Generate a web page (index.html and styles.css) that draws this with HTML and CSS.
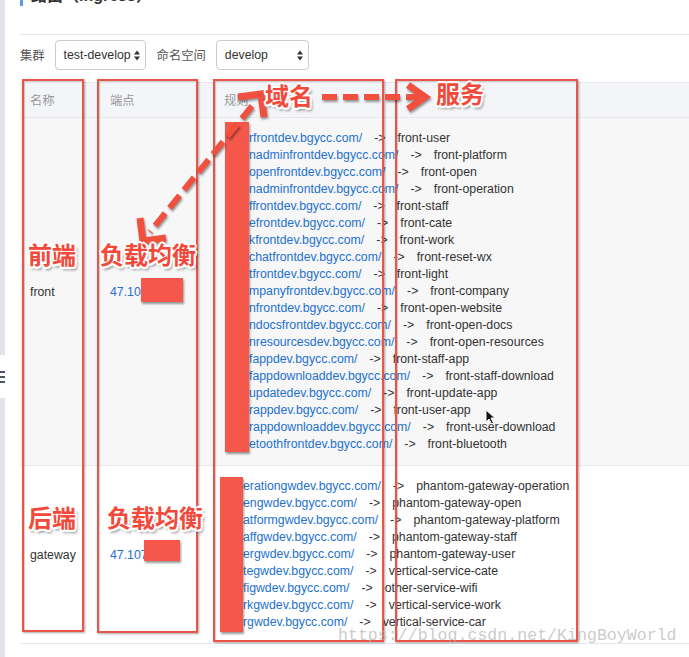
FILE: index.html
```html
<!DOCTYPE html>
<html lang="zh-CN">
<head>
<meta charset="utf-8">
<title>路由（ingress）</title>
<link rel="stylesheet" href="styles.css">
</head>
<body>
<div class="app">
  <aside class="sidebar">
    <div class="side-toggle"><span></span><span></span><span></span></div>
  </aside>
  <main class="main">
    <div class="page-head"><h2 class="title">路由（ingress）</h2></div>
    <div class="filters">
      <span class="flabel">集群</span>
      <div class="select s1"><span>test-develop</span><svg class="caret" width="6" height="11" viewBox="0 0 6 11"><path d="M0 4.5 3 0.5 6 4.5Z M0 6.5 3 10.5 6 6.5Z"/></svg></div>
      <span class="flabel">命名空间</span>
      <div class="select s2"><span>develop</span><svg class="caret" width="6" height="11" viewBox="0 0 6 11"><path d="M0 4.5 3 0.5 6 4.5Z M0 6.5 3 10.5 6 6.5Z"/></svg></div>
    </div>
    <div class="table">
      <div class="row head">
        <div class="cell">名称</div>
        <div class="cell">端点</div>
        <div class="cell">规则</div>
      </div>
      <div class="row hover">
        <div class="cell mid">front</div>
        <div class="cell mid"><a class="link">47.10</a></div>
        <div class="cell rules front-rules">
          <div class="rule"><a class="link">rfrontdev.bgycc.com/</a><span class="arr">-&gt;</span><span>front-user</span></div>
          <div class="rule"><a class="link">nadminfrontdev.bgycc.com/</a><span class="arr">-&gt;</span><span>front-platform</span></div>
          <div class="rule"><a class="link">openfrontdev.bgycc.com/</a><span class="arr">-&gt;</span><span>front-open</span></div>
          <div class="rule"><a class="link">nadminfrontdev.bgycc.com/</a><span class="arr">-&gt;</span><span>front-operation</span></div>
          <div class="rule"><a class="link">ffrontdev.bgycc.com/</a><span class="arr">-&gt;</span><span>front-staff</span></div>
          <div class="rule"><a class="link">efrontdev.bgycc.com/</a><span class="arr">-&gt;</span><span>front-cate</span></div>
          <div class="rule"><a class="link">kfrontdev.bgycc.com/</a><span class="arr">-&gt;</span><span>front-work</span></div>
          <div class="rule"><a class="link">chatfrontdev.bgycc.com/</a><span class="arr">-&gt;</span><span>front-reset-wx</span></div>
          <div class="rule"><a class="link">tfrontdev.bgycc.com/</a><span class="arr">-&gt;</span><span>front-light</span></div>
          <div class="rule"><a class="link">mpanyfrontdev.bgycc.com/</a><span class="arr">-&gt;</span><span>front-company</span></div>
          <div class="rule"><a class="link">nfrontdev.bgycc.com/</a><span class="arr">-&gt;</span><span>front-open-website</span></div>
          <div class="rule"><a class="link">ndocsfrontdev.bgycc.com/</a><span class="arr">-&gt;</span><span>front-open-docs</span></div>
          <div class="rule"><a class="link">nresourcesdev.bgycc.com/</a><span class="arr">-&gt;</span><span>front-open-resources</span></div>
          <div class="rule"><a class="link">fappdev.bgycc.com/</a><span class="arr">-&gt;</span><span>front-staff-app</span></div>
          <div class="rule"><a class="link">fappdownloaddev.bgycc.com/</a><span class="arr">-&gt;</span><span>front-staff-download</span></div>
          <div class="rule"><a class="link">updatedev.bgycc.com/</a><span class="arr">-&gt;</span><span>front-update-app</span></div>
          <div class="rule"><a class="link">rappdev.bgycc.com/</a><span class="arr">-&gt;</span><span>front-user-app</span></div>
          <div class="rule"><a class="link">rappdownloaddev.bgycc.com/</a><span class="arr">-&gt;</span><span>front-user-download</span></div>
          <div class="rule"><a class="link">etoothfrontdev.bgycc.com/</a><span class="arr">-&gt;</span><span>front-bluetooth</span></div>
        </div>
      </div>
      <div class="row">
        <div class="cell mid">gateway</div>
        <div class="cell mid"><a class="link">47.107</a></div>
        <div class="cell rules gw-rules">
          <div class="rule"><a class="link">erationgwdev.bgycc.com/</a><span class="arr">-&gt;</span><span>phantom-gateway-operation</span></div>
          <div class="rule"><a class="link">engwdev.bgycc.com/</a><span class="arr">-&gt;</span><span>phantom-gateway-open</span></div>
          <div class="rule"><a class="link">atformgwdev.bgycc.com/</a><span class="arr">-&gt;</span><span>phantom-gateway-platform</span></div>
          <div class="rule"><a class="link">affgwdev.bgycc.com/</a><span class="arr">-&gt;</span><span>phantom-gateway-staff</span></div>
          <div class="rule"><a class="link">ergwdev.bgycc.com/</a><span class="arr">-&gt;</span><span>phantom-gateway-user</span></div>
          <div class="rule"><a class="link">tegwdev.bgycc.com/</a><span class="arr">-&gt;</span><span>vertical-service-cate</span></div>
          <div class="rule"><a class="link">figwdev.bgycc.com/</a><span class="arr">-&gt;</span><span>other-service-wifi</span></div>
          <div class="rule"><a class="link">rkgwdev.bgycc.com/</a><span class="arr">-&gt;</span><span>vertical-service-work</span></div>
          <div class="rule"><a class="link">rgwdev.bgycc.com/</a><span class="arr">-&gt;</span><span>vertical-service-car</span></div>
        </div>
      </div>
    </div>
  </main>
</div>

<div class="annot">
  <div class="box box-name"></div>
  <div class="box box-ep"></div>
  <div class="box box-rule"></div>
  <div class="box box-svc"></div>
  <div class="fill fill-rule-front"></div>
  <div class="fill fill-rule-gw"></div>
  <div class="fill fill-ep-front"></div>
  <div class="fill fill-ep-gw"></div>
  <svg class="arrows" width="689" height="657" viewBox="0 0 689 657">
    <g stroke="#f2503f" fill="none" stroke-width="6">
      <line x1="322" y1="97" x2="419" y2="97" stroke-dasharray="15 6"/>
      <polyline points="408,85 425,97 408,109" stroke-width="7"/>
      <line x1="252" y1="106" x2="150" y2="232" stroke-dasharray="16 7"/>
      <polyline points="238,97 261,94 264,117" stroke-width="7"/>
      <polyline points="140,218 143,241 166,238" stroke-width="7"/>
    </g>
  </svg>
  <div class="tag tag-domain">域名</div>
  <div class="tag tag-svc">服务</div>
  <div class="tag tag-front">前端</div>
  <div class="tag tag-lb1">负载均衡</div>
  <div class="tag tag-back">后端</div>
  <div class="tag tag-lb2">负载均衡</div>
  <svg class="cursor" width="11" height="16" viewBox="0 0 11 16"><path d="M1 1 L1 13 L4 10 L6.5 15 L8.5 14 L6 9 L10 9 Z" fill="#111" stroke="#fff" stroke-width="1"/></svg>
  <div class="watermark">https://blog.csdn.net/KingBoyWorld</div>
</div>
</body>
</html>
```

FILE: styles.css
```css
* { box-sizing: border-box; }

html, body {
  margin: 0;
  padding: 0;
}

body {
  width: 689px;
  height: 657px;
  overflow: hidden;
  background: #fff;
  font-family: "Liberation Sans", "Noto Sans CJK SC", Arial, sans-serif;
  font-size: 12.3px;
  color: #333;
  position: relative;
}

.app {
  display: flex;
  height: 657px;
}

.sidebar {
  width: 5px;
  flex: none;
  background: #e1e4ea;
}

.side-toggle {
  margin-top: 355px;
  height: 43px;
  background: #fff;
  display: flex;
  flex-direction: column;
  justify-content: center;
  gap: 3px;
}

.side-toggle span {
  display: block;
  height: 2px;
  width: 5px;
  background: #485466;
}

.main {
  flex: 1;
  min-width: 0;
  padding-left: 15px;
}

.page-head {
  display: flow-root;
  height: 35px;
  border-bottom: 1px solid #e6e7eb;
}

.title {
  margin: -14px 0 0 0;
  height: 20px;
  line-height: 20px;
  font-size: 16px;
  font-weight: 700;
  color: #333;
  border-left: 3px solid #5c9be6;
  padding-left: 8px;
  font-family: "Liberation Sans", "Noto Sans CJK SC", sans-serif;
}

.filters {
  display: flex;
  align-items: center;
  margin-top: 5px;
  height: 30px;
}

.flabel {
  color: #555;
  margin-right: 10px;
}

.select {
  height: 30px;
  border: 1px solid #ccc;
  border-radius: 4px;
  background: #fff;
  display: flex;
  align-items: center;
  justify-content: space-between;
  padding: 0 5px 0 8px;
  color: #333;
}

.s1 { width: 91px; margin-right: 11px; }
.s2 { width: 93px; }

.caret { fill: #333; }

.table {
  margin-top: 12px;
  border-top: 1px solid #e6e8ee;
}

.row {
  display: grid;
  grid-template-columns: 80px 114px 1fr;
  border-bottom: 1px solid #e6e8ee;
}

.row.head {
  height: 35px;
  background: #f4f5f8;
  color: #999;
}

.row.head .cell {
  display: flex;
  align-items: center;
}

.row.hover { background: #f7f7f7; }

.cell {
  padding: 0 10px;
  white-space: nowrap;
}

.cell.mid {
  display: flex;
  align-items: center;
}

.link {
  color: #2471cf;
  text-decoration: none;
}

.rules {
  padding-top: 12px;
  padding-bottom: 12px;
}

.front-rules { padding-left: 35px; }
.gw-rules { padding-left: 29px; }

.rule {
  line-height: 17px;
  height: 17px;
}

.arr { margin: 0 12px; }

/* annotation overlay */
.annot {
  position: absolute;
  left: 0;
  top: 0;
  width: 689px;
  height: 657px;
  pointer-events: none;
}

.box {
  position: absolute;
  border: 2px solid #ea5547;
  box-shadow: 1px 1px 2px rgba(0, 0, 0, 0.35), inset 1px 1px 1px rgba(0, 0, 0, 0.2);
}

.box-name { left: 22px; top: 79px; width: 62px; height: 553px; }
.box-ep   { left: 97px; top: 79px; width: 101px; height: 554px; }
.box-rule { left: 213px; top: 79px; width: 171px; height: 563px; }
.box-svc  { left: 395px; top: 79px; width: 183px; height: 563px; }

.fill {
  position: absolute;
  background: #f5574a;
  box-shadow: 1px 2px 2px rgba(0, 0, 0, 0.4);
}

.fill-rule-front { left: 225px; top: 122px; width: 24px; height: 330px; }
.fill-rule-gw    { left: 220px; top: 477px; width: 23px; height: 155px; }
.fill-ep-front   { left: 141px; top: 278px; width: 42px; height: 24px; }
.fill-ep-gw      { left: 144px; top: 540px; width: 36px; height: 21px; }

.arrows {
  position: absolute;
  left: 0;
  top: 0;
  filter: drop-shadow(1px 2px 1px rgba(0, 0, 0, 0.4));
}

.tag {
  position: absolute;
  font-family: "Noto Sans CJK SC", sans-serif;
  font-weight: 700;
  font-size: 24px;
  line-height: 24px;
  color: #f2493a;
  white-space: nowrap;
  text-shadow:
    2px 0 0 #fff, -2px 0 0 #fff, 0 2px 0 #fff, 0 -2px 0 #fff,
    1.5px 1.5px 0 #fff, -1.5px -1.5px 0 #fff, 1.5px -1.5px 0 #fff, -1.5px 1.5px 0 #fff,
    2px 3px 3px rgba(0, 0, 0, 0.55);
}

.tag-domain { left: 265px; top: 83px; }
.tag-svc    { left: 436px; top: 81px; }
.tag-front  { left: 28px; top: 242px; }
.tag-lb1    { left: 100px; top: 242px; }
.tag-back   { left: 28px; top: 505px; }
.tag-lb2    { left: 107px; top: 505px; }

.cursor {
  position: absolute;
  left: 485px;
  top: 409px;
}

.watermark {
  position: absolute;
  left: 338px;
  top: 626px;
  font-family: "Liberation Mono", monospace;
  font-size: 16.6px;
  line-height: 20px;
  color: rgba(180, 180, 180, 0.7);
  white-space: nowrap;
}
```
